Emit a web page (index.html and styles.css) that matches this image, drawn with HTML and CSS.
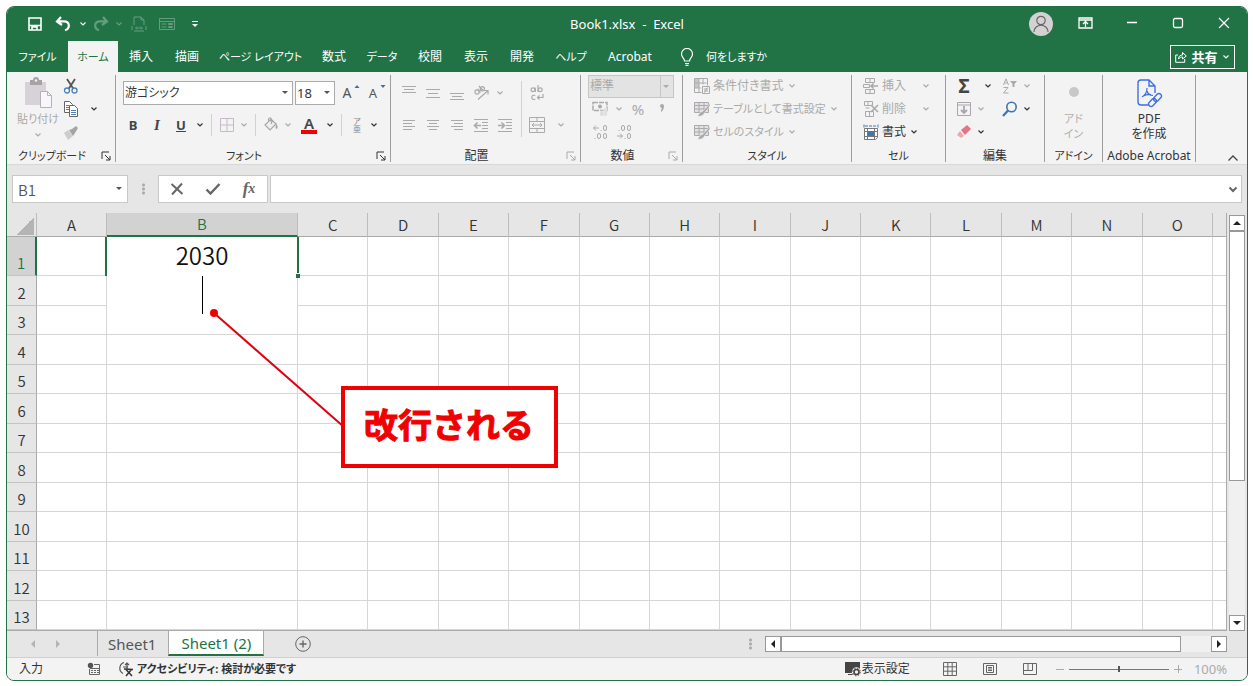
FILE: index.html
```html
<!DOCTYPE html>
<html lang="ja">
<head>
<meta charset="utf-8">
<title>Book1.xlsx - Excel</title>
<link rel="stylesheet" href="styles.css">
</head>
<body>
<svg class="sprite" aria-hidden="true">
  <symbol id="chev" viewBox="0 0 8 6"><path d="M1.500 1.500L4 4l2.500-2.500" fill="none" stroke="currentColor" stroke-width="1.200"/></symbol>
  <symbol id="launch" viewBox="0 0 10 10"><path d="M1 8V1h7M4 4l5 5M9 5v4H5" fill="none" stroke="currentColor"/></symbol>
  <symbol id="save" viewBox="0 0 16 16"><path d="M2 2h12v12H2zM2 9.500h12M5 14v-3h5v3" fill="none" stroke="currentColor" stroke-width="1.600"/></symbol>
  <symbol id="undo" viewBox="0 0 16 16"><path d="M6 1L2 5.500 7 9M2.500 5.300H9c6 0 6.500 7 1 9" fill="none" stroke="currentColor" stroke-width="2.200"/></symbol>
  <symbol id="pagefit" viewBox="0 0 16 16"><path d="M3 9V1h7l3 3v5M10 1v3h3M3 15h10M1 10v4M15 10v4M5 12h6M6 10.500L4.500 12 6 13.500M10 10.500l1.500 1.500-1.500 1.500" fill="none" stroke="currentColor"/></symbol>
  <symbol id="form" viewBox="0 0 16 16"><path d="M.5 2.500h15v11H.5zM.5 5.500h15M2.500 8h5M2.500 11h5M9.500 7.500h4v1h-4zM9.500 10.500h4v1h-4z" fill="none" stroke="currentColor"/></symbol>
  <symbol id="user" viewBox="0 0 24 24"><circle cx="12" cy="12" r="12" fill="#d2d2d2"/><circle cx="12" cy="8.500" r="4.200" fill="none" stroke="#666" stroke-width="1.200"/><path d="M5 20c0-9 14-9 14 0" fill="none" stroke="#666" stroke-width="1.200"/></symbol>
  <symbol id="ribbonopt" viewBox="0 0 16 12"><path d="M1 1h13v10H1zM1 3h13M7.500 10V5M5 7l2.500-2.500L10 7" fill="none" stroke="currentColor" stroke-width="1.300"/></symbol>
  <symbol id="bulb" viewBox="0 0 14 18"><path d="M4.500 13c0-3-3-3.500-3-7a5.500 5.500 0 0 1 11 0c0 3.500-3 4-3 7zM5 15.500h4M5.500 17.300h3" fill="none" stroke="currentColor" stroke-width="1.200"/></symbol>
  <symbol id="share" viewBox="0 0 12 12"><path d="M3 4H.7v7.300h9V8M3.500 8c0-3 2-4 4-4V1.500L11.300 5 7.500 8V6C6 6 4.500 6.500 3.500 8z" fill="none" stroke="currentColor"/></symbol>
  <symbol id="paste" viewBox="0 0 30 32"><path d="M2 5h21v23H2z" fill="#d6d2d8"/><path d="M7 3h3a3 3 0 0 1 6 0h3v5H7z" fill="#a5a3a6"/><circle cx="13" cy="3.500" r="1.200" fill="#f3f3f3"/><path d="M17.500 14.500h7l4 4v12h-11zM24.500 14.500v4h4" fill="#f8f6fa" stroke="#b5b0ba"/></symbol>
  <symbol id="cut" viewBox="0 0 16 16"><path d="M4 1l6.500 10M12 1L5.500 11" stroke="#555" stroke-width="1.800" fill="none"/><g fill="none" stroke="#4d82b8" stroke-width="1.300"><circle cx="4" cy="12.500" r="2.500"/><circle cx="11.500" cy="12.500" r="2.500"/></g></symbol>
  <symbol id="copy" viewBox="0 0 16 16"><g fill="#fff" stroke="#666"><path d="M1.500.5h5l3 3v8h-8z"/><path d="M6.500 4.500h5l3 3v8h-8z"/></g><path d="M3 4.500h3M3 6.500h3M3 8.500h3M8 9.500h5M8 11.500h5M8 13.500h5" stroke="#4d82b8"/></symbol>
  <symbol id="brush" viewBox="0 0 16 16"><path d="M1 8l4-3 5 6-5 4z" fill="#cfcbd0"/><path d="M6 5l3-1 3 4-2 3zM9 4l4-3 2 2-3 5z" fill="#a4a4a4"/></symbol>
  <symbol id="aup" viewBox="0 0 16 16"><path d="M9.500 5h5L12 2z" fill="#3c6fae"/></symbol>
  <symbol id="adown" viewBox="0 0 16 16"><path d="M9.500 2h5L12 5z" fill="#3c6fae"/></symbol>
  <symbol id="borders" viewBox="0 0 16 16"><path d="M1.500 1.500h13v13h-13zM8 1v14M1 8h14" fill="none" stroke="#c5bbc8"/></symbol>
  <symbol id="bucket" viewBox="0 0 16 16"><path d="M2 8l6-6 5 5-6 6zM5.500 5V2q1.500-2.500 3 0v5" fill="#f0edf1" stroke="#aaa6ab" stroke-width="1.200"/><path d="M13 6q2 3 1.500 5-1.500 2-2-.5z" fill="#aaa6ab"/></symbol>
  <symbol id="vtop" viewBox="0 0 16 16"><path d="M1 1.500h14M3 4.500h10M1 7.500h14" stroke="currentColor"/></symbol>
  <symbol id="vmid" viewBox="0 0 16 16"><path d="M1 4.500h14M3 8.500h10M1 12.500h14M1 6.500h0" stroke="currentColor"/></symbol>
  <symbol id="vbot" viewBox="0 0 16 16"><path d="M1 8.500h14M3 11.500h10M1 14.500h14" stroke="currentColor"/></symbol>
  <symbol id="hleft" viewBox="0 0 16 16"><path d="M2 3.500h12M2 6.500h9M2 9.500h12M2 12.500h9" stroke="currentColor"/></symbol>
  <symbol id="hmid" viewBox="0 0 16 16"><path d="M2 3.500h12M4 6.500h8M2 9.500h12M4 12.500h8" stroke="currentColor"/></symbol>
  <symbol id="hright" viewBox="0 0 16 16"><path d="M2 3.500h12M5 6.500h9M2 9.500h12M5 12.500h9" stroke="currentColor"/></symbol>
  <symbol id="outdent" viewBox="0 0 16 16"><path d="M1 2.500h14M9 5.500h6M9 8.500h6M9 11.500h6M1 14.500h14" stroke="currentColor"/><path d="M8 8.500H2M4.500 5.500l-3 3 3 3" fill="none" stroke="currentColor" stroke-width="1.600"/></symbol>
  <symbol id="indent" viewBox="0 0 16 16"><path d="M1 2.500h14M9 5.500h6M9 8.500h6M9 11.500h6M1 14.500h14" stroke="currentColor"/><path d="M1 8.500h6M4.500 5.500l3 3-3 3" fill="none" stroke="currentColor" stroke-width="1.600"/></symbol>
  <symbol id="orient" viewBox="0 0 16 16"><g fill="none" stroke="currentColor" stroke-width="1.200"><circle cx="4" cy="7" r="2.100"/><path d="M4.500 4l3 3.500M6 1l4 4.500"/><circle cx="9.300" cy="3.800" r="2.100"/><path d="M5 14.500L14.500 6M11 5.500h4v4"/></g></symbol>
  <symbol id="wrap" viewBox="0 0 16 16"><g fill="none" stroke="currentColor" stroke-width="1.200"><circle cx="4" cy="4.800" r="1.900"/><path d="M6.300 2.500V7M9 0v7"/><circle cx="11.300" cy="4.800" r="1.900"/><path d="M6.300 10.500q-3.500-1-3.500 1.800t3.500 2M14 9v3.500H8.500M10.500 10.500l-2 2 2 2"/></g></symbol>
  <symbol id="merge" viewBox="0 0 16 16"><path d="M.5.500h15v15H.5zM.5 4.500h15M.5 11.500h15M8 .5v4M8 11.500v4M3 8h10M5 6L3 8l2 2M11 6l2 2-2 2" fill="none" stroke="currentColor"/></symbol>
  <symbol id="money" viewBox="0 0 16 16"><path d="M1 1.500h14v8H1z" fill="none" stroke="currentColor" stroke-width="1.500" stroke-dasharray="5 1"/><circle cx="8" cy="5.500" r="2" fill="currentColor"/><path d="M8 10h4v5H8zM12 7h3v8h-3z" fill="#dedade" stroke="#f3f3f3" stroke-width=".5"/></symbol>
  <symbol id="decup" viewBox="0 0 16 16"><g fill="none" stroke="currentColor"><path d="M7 4H1.500M4 1.500L1.500 4 4 6.500M9 6v1M3 14v1"/><rect x="11.500" y="1.500" width="3" height="5" rx="1.500"/><rect x="5.500" y="9.500" width="3" height="5" rx="1.500"/><rect x="11.500" y="9.500" width="3" height="5" rx="1.500"/></g></symbol>
  <symbol id="decdown" viewBox="0 0 16 16"><g fill="none" stroke="currentColor"><path d="M1 12h5.500M4 9.500L6.500 12 4 14.500M9 14v1M3 6v1"/><rect x="5.500" y="1.500" width="3" height="5" rx="1.500"/><rect x="11.500" y="1.500" width="3" height="5" rx="1.500"/><rect x="11.500" y="9.500" width="3" height="5" rx="1.500"/></g></symbol>
  <symbol id="cond" viewBox="0 0 16 16"><path d="M.5.500h13v7M.5.500v14h7M5 .5v14M9 .5v6M.5 5h12M.5 10h6M8.500 8.500h7v7h-7zM10 11h4M10 13h4M13.500 9.500l-3 5" fill="none" stroke="currentColor"/><path d="M1 1h4v9H1z" fill="currentColor" opacity=".6"/></symbol>
  <symbol id="tblfmt" viewBox="0 0 16 16"><path d="M.5 1.500h14v10H.5zM.5 4.500h14M.5 8h14M5 1.500v10M10 1.500v10" fill="#e6e1e7" stroke="currentColor"/><path d="M16 2.500l-7 7.500-3 1.500L3.500 15q5 1 7-3L16 5z" fill="currentColor" stroke="#f3f3f3" stroke-width=".6"/></symbol>
  <symbol id="cins" viewBox="0 0 16 16"><path d="M2.500.5h9v4h-9zM7 .5v4M2.500 11.500h9v4h-9zM7 11.500v4M.5 6.500h6v3h-6z" fill="none" stroke="currentColor"/><path d="M15 8H8M10.500 5.500L8 8l2.500 2.500" fill="none" stroke="currentColor" stroke-width="1.600"/></symbol>
  <symbol id="cdel" viewBox="0 0 16 16"><path d="M1.500.5h8v4h-8zM5 .5v4M2.500 10.500h8v5h-8zM6.500 10.500v5M2.500 7h4" fill="none" stroke="currentColor"/><path d="M8 4l7 7M15 4l-7 7" stroke="currentColor" stroke-width="1.600"/></symbol>
  <symbol id="cfmt" viewBox="0 0 16 16"><path d="M1 .5v3M15 .5v3M2 2h12" stroke="#3f78ae" stroke-dasharray="3 1"/><path d="M1.500 4.500h13v9l-2 2h-11zM1.500 7.500h13M1.500 12.500h13M4.500 4.500v11M11.500 4.500v11" fill="#fff" stroke="#777"/><path d="M5 7h6v5H5z" fill="#3f78ae"/></symbol>
  <symbol id="sort" viewBox="0 0 16 16"><path d="M1.500 7L4 .8 6.500 7M2.500 5h3M1.500 9.500h4.500L1.500 15H6.500" fill="none" stroke="currentColor"/><path d="M8 3h7l-2.500 3v3h-2V6z" fill="currentColor"/></symbol>
  <symbol id="fill" viewBox="0 0 16 16"><path d="M1.500 1.500h13v13h-13zM1.500 4h13" fill="none" stroke="#aaa4ac"/><path d="M8 5v7M5 9l3 3 3-3" fill="none" stroke="#aaa4ac" stroke-width="1.800"/></symbol>
  <symbol id="find" viewBox="0 0 16 16"><circle cx="9.500" cy="6" r="4.700" fill="none" stroke="#3c74b0" stroke-width="1.600"/><path d="M6 9.500L1 15" stroke="#3c74b0" stroke-width="2.200"/></symbol>
  <symbol id="eraser" viewBox="0 0 16 16"><path d="M5 6l6-5 4 4-6 6z" fill="#e57388"/><path d="M4 7l4 5-3 2-4-3z" fill="#f0a5b1"/></symbol>
  <symbol id="pdf" viewBox="0 0 28 30"><g fill="none" stroke="#3f6fe0" stroke-width="1.400"><path d="M13 26H6q-3 0-3-3V4q0-3 3-3h8l6 6v7M14 1v6h6"/><path d="M7 18q5-3 5-9M12 12q1 4 6 4.500M8 17q4-2 8-1.500" stroke-width="1.200"/><rect x="13" y="21" width="9" height="5" rx="2.500" transform="rotate(-45 17.500 23.500)"/><rect x="18" y="16" width="9" height="5" rx="2.500" transform="rotate(-45 22.500 18.500)"/></g></symbol>
  <symbol id="cross" viewBox="0 0 14 14"><path d="M1.500 2l11 10M12 1.500L2 12.500" stroke="currentColor" stroke-width="2" fill="none"/></symbol>
  <symbol id="check" viewBox="0 0 16 14"><path d="M1.500 7.500l4 4 9-9.500" stroke="currentColor" stroke-width="2.400" fill="none"/></symbol>
  <symbol id="macro" viewBox="0 0 14 14"><path d="M7 2.500h5.500v10h-10V7M3 6.500h9.500" fill="none" stroke="#666"/><path d="M4 8.500h8M4 10.500h8" stroke="#666" stroke-dasharray="2 1"/><circle cx="3.500" cy="3.500" r="2.700" fill="#555"/></symbol>
  <symbol id="acc" viewBox="0 0 16 16"><path d="M6 1.500A6 6 0 0 0 5 12.500M5 6h5M9 2v6M7 4l2-2 2 2" fill="none" stroke="#555" stroke-width="1.200"/><path d="M6 8l9 .5M8 8.500l6 6.500M13.500 8.500L8 15" stroke="#333" stroke-width="1.500" fill="none"/></symbol>
  <symbol id="disp" viewBox="0 0 16 16"><path d="M0 1h15v11H0zM3 13h5v1H3z" fill="#444"/><circle cx="11.500" cy="11" r="3.200" fill="#f3f3f3" stroke="#f3f3f3" stroke-width="3"/><circle cx="11.500" cy="11" r="2.500" fill="none" stroke="#444" stroke-width="1.600"/><circle cx="11.500" cy="11" r="3.800" fill="none" stroke="#444" stroke-dasharray="1.500 1.500"/></symbol>
  <symbol id="vnorm" viewBox="0 0 14 14"><path d="M.5.500h13v13H.5zM.5 4.800h13M.5 9.200h13M4.800.5v13M9.200.5v13" fill="none" stroke="#666"/></symbol>
  <symbol id="vpage" viewBox="0 0 14 14"><path d="M.5 1.500h13v11H.5zM3.500 3.500h7v7h-7zM5 5.500h4M5 7h4M5 8.500h4" fill="none" stroke="#666"/></symbol>
  <symbol id="vbreak" viewBox="0 0 14 14"><path d="M.5 1.500h13v11H.5zM5 1.500v7M9.500 1.500v7M.5 8.500h9" fill="none" stroke="#666"/></symbol>
</svg>

<div class="window">
  <header class="titlebar">
    <div class="qat">
      <button class="w28" aria-label="保存"><svg class="ico"><use href="#save"/></svg></button>
      <button class="w28" aria-label="元に戻す"><svg class="ico"><use href="#undo"/></svg></button>
      <button class="chev" aria-label="元に戻す一覧"><svg><use href="#chev"/></svg></button>
      <button class="w24 faint" aria-label="やり直し"><svg class="ico flip"><use href="#undo"/></svg></button>
      <button class="chev faint" aria-label="やり直し一覧"><svg><use href="#chev"/></svg></button>
      <button class="w28 faint" aria-label="ページ"><svg class="ico"><use href="#pagefit"/></svg></button>
      <button class="w28 faint" aria-label="フォーム"><svg class="ico"><use href="#form"/></svg></button>
      <button class="w28" aria-label="カスタマイズ"><span class="more"></span></button>
    </div>
    <h1>Book1.xlsx&nbsp; -&nbsp; Excel</h1>
    <div class="winbtns">
      <button class="avatar" aria-label="アカウント"><svg><use href="#user"/></svg></button>
      <button aria-label="リボンの表示オプション"><svg width="16" height="12"><use href="#ribbonopt"/></svg></button>
      <button aria-label="最小化"><svg width="12" height="12"><path d="M1 5.500h10" stroke="#fff" stroke-width="1.300"/></svg></button>
      <button aria-label="最大化"><svg width="12" height="12"><rect x="1.500" y="1.500" width="9" height="9" rx="1.500" fill="none" stroke="#fff" stroke-width="1.300"/></svg></button>
      <button aria-label="閉じる"><svg width="12" height="12"><path d="M1 1l10 10M11 1L1 11" stroke="#fff" stroke-width="1.300"/></svg></button>
    </div>
  </header>

  <div class="tabbar">
    <nav class="tabs">
      <button class="kana">ファイル</button><button class="kana on">ホーム</button><button>挿入</button><button>描画</button><button class="kana">ページ レイアウト</button><button>数式</button><button class="kana">データ</button><button>校閲</button><button>表示</button><button>開発</button><button class="kana">ヘルプ</button><button>Acrobat</button>
    </nav>
    <button class="tell kana"><svg width="14" height="18"><use href="#bulb"/></svg>何をしますか</button>
    <button class="share"><svg width="12" height="12"><use href="#share"/></svg><b>共有</b><svg class="cv"><use href="#chev"/></svg></button>
  </div>

  <div class="ribbon">
    <section class="group">
      <div class="body clip">
        <button class="big off"><svg width="30" height="32"><use href="#paste"/></svg><span class="kana">貼り付け</span><svg class="cv"><use href="#chev"/></svg></button>
        <div class="stack">
          <button aria-label="切り取り"><svg class="ico"><use href="#cut"/></svg></button>
          <button aria-label="コピー"><svg class="ico"><use href="#copy"/></svg></button>
          <button aria-label="書式のコピー"><svg class="ico"><use href="#brush"/></svg></button>
        </div>
        <button class="w28 copymenu" aria-label="コピー一覧"><svg class="cv"><use href="#chev"/></svg></button>
      </div>
      <footer><span class="kana">クリップボード</span><button aria-label="詳細"><svg><use href="#launch"/></svg></button></footer>
    </section>

    <section class="group">
      <div class="body two">
        <div class="row fonts">
          <label class="combo face"><select aria-label="フォント名"><option>游ゴシック</option></select></label>
          <label class="combo size"><select aria-label="フォント サイズ"><option>18</option></select></label>
          <button class="w24 asize" aria-label="拡大">A<svg class="ico"><use href="#aup"/></svg></button>
          <button class="w24 asize small" aria-label="縮小">A<svg class="ico"><use href="#adown"/></svg></button>
        </div>
        <div class="row format">
          <button class="w24"><b>B</b></button>
          <button class="w24"><b class="it">I</b></button>
          <button class="w24"><b class="un">U</b></button>
          <button class="chev" aria-label="下線"><svg><use href="#chev"/></svg></button>
          <i class="sep"></i>
          <button class="w20 off" aria-label="罫線"><svg class="ico"><use href="#borders"/></svg></button>
          <button class="chev off" aria-label="罫線一覧"><svg><use href="#chev"/></svg></button>
          <i class="sep"></i>
          <button class="w20 off" aria-label="塗りつぶし"><svg class="ico"><use href="#bucket"/></svg></button>
          <button class="chev off" aria-label="塗りつぶし一覧"><svg><use href="#chev"/></svg></button>
          <button class="w28"><span class="fcolor">A</span></button>
          <button class="chev" aria-label="文字色"><svg><use href="#chev"/></svg></button>
          <i class="sep"></i>
          <button class="w20 ruby"><span>ア</span><span>亜</span></button>
          <button class="chev" aria-label="ふりがな"><svg><use href="#chev"/></svg></button>
        </div>
      </div>
      <footer><span class="kana">フォント</span><button aria-label="詳細"><svg><use href="#launch"/></svg></button></footer>
    </section>

    <section class="group off">
      <div class="body align">
        <div class="two">
          <div class="row">
            <button class="w24" aria-label="上揃え"><svg class="ico"><use href="#vtop"/></svg></button>
            <button class="w24" aria-label="上下中央"><svg class="ico"><use href="#vmid"/></svg></button>
            <button class="w24" aria-label="下揃え"><svg class="ico"><use href="#vbot"/></svg></button>
            <button class="w24" aria-label="方向"><svg class="ico"><use href="#orient"/></svg></button>
            <button class="chev" aria-label="方向一覧"><svg><use href="#chev"/></svg></button>
          </div>
          <div class="row">
            <button class="w24" aria-label="左揃え"><svg class="ico"><use href="#hleft"/></svg></button>
            <button class="w24" aria-label="中央揃え"><svg class="ico"><use href="#hmid"/></svg></button>
            <button class="w24" aria-label="右揃え"><svg class="ico"><use href="#hright"/></svg></button>
            <button class="w24" aria-label="インデント減"><svg class="ico"><use href="#outdent"/></svg></button>
            <button class="w24" aria-label="インデント増"><svg class="ico"><use href="#indent"/></svg></button>
          </div>
        </div>
        <i class="sep tall"></i>
        <div class="two">
          <div class="row"><button class="w20" aria-label="折り返し"><svg class="ico"><use href="#wrap"/></svg></button></div>
          <div class="row"><button class="w20" aria-label="結合"><svg class="ico"><use href="#merge"/></svg></button><button class="w28" aria-label="結合一覧"><svg class="cv"><use href="#chev"/></svg></button></div>
        </div>
      </div>
      <footer><span>配置</span><button aria-label="詳細"><svg><use href="#launch"/></svg></button></footer>
    </section>

    <section class="group off">
      <div class="body three number">
        <div class="row"><label class="combo num"><select aria-label="表示形式" disabled><option>標準</option></select></label></div>
        <div class="row">
          <button class="w24" aria-label="通貨"><svg class="ico"><use href="#money"/></svg></button>
          <button class="chev" aria-label="通貨一覧"><svg><use href="#chev"/></svg></button>
          <button class="w24 sym">%</button>
          <button class="w24" aria-label="桁区切り"><svg width="6" height="10" viewBox="0 0 6 10"><path d="M1 2a2 2 0 0 1 4 0q0 4-3 6V6l1-2a2 2 0 0 1-2-2z" fill="currentColor"/></svg></button>
        </div>
        <div class="row">
          <button class="w24" aria-label="小数点増"><svg class="ico"><use href="#decup"/></svg></button>
          <button class="w24" aria-label="小数点減"><svg class="ico"><use href="#decdown"/></svg></button>
        </div>
      </div>
      <footer><span>数値</span><button aria-label="詳細"><svg><use href="#launch"/></svg></button></footer>
    </section>

    <section class="group off">
      <div class="body three items">
        <button class="row"><svg class="ico"><use href="#cond"/></svg>条件付き書式<svg class="cv"><use href="#chev"/></svg></button>
        <button class="row kana"><svg class="ico"><use href="#tblfmt"/></svg>テーブルとして書式設定<svg class="cv"><use href="#chev"/></svg></button>
        <button class="row kana"><svg class="ico"><use href="#tblfmt"/></svg>セルのスタイル<svg class="cv"><use href="#chev"/></svg></button>
      </div>
      <footer><span class="kana">スタイル</span></footer>
    </section>

    <section class="group">
      <div class="body three items">
        <button class="row off wide"><svg class="ico"><use href="#cins"/></svg>挿入<svg class="cv"><use href="#chev"/></svg></button>
        <button class="row off wide"><svg class="ico"><use href="#cdel"/></svg>削除<svg class="cv"><use href="#chev"/></svg></button>
        <button class="row"><svg class="ico"><use href="#cfmt"/></svg>書式<svg class="cv"><use href="#chev"/></svg></button>
      </div>
      <footer><span class="kana">セル</span></footer>
    </section>

    <section class="group">
      <div class="body edit">
        <button class="sigma">Σ</button>
        <button class="w28" aria-label="合計一覧"><svg class="cv"><use href="#chev"/></svg></button>
        <button class="off" aria-label="並べ替え"><svg class="ico"><use href="#sort"/></svg></button>
        <button class="chev off" aria-label="並べ替え一覧"><svg><use href="#chev"/></svg></button>
        <button aria-label="フィル"><svg class="ico"><use href="#fill"/></svg></button>
        <button class="chev off" aria-label="フィル一覧"><svg><use href="#chev"/></svg></button>
        <button aria-label="検索"><svg class="ico"><use href="#find"/></svg></button>
        <button class="chev" aria-label="検索一覧"><svg><use href="#chev"/></svg></button>
        <button aria-label="クリア"><svg class="ico"><use href="#eraser"/></svg></button>
        <button class="chev" aria-label="クリア一覧"><svg><use href="#chev"/></svg></button>
      </div>
      <footer><span>編集</span></footer>
    </section>

    <section class="group">
      <div class="body"><button class="big addin kana off"><i class="dot"></i><span>アド<br>イン</span></button></div>
      <footer><span class="kana">アドイン</span></footer>
    </section>

    <section class="group">
      <div class="body"><button class="big addin"><svg width="28" height="30"><use href="#pdf"/></svg><span>PDF<br>を作成</span></button></div>
      <footer><span>Adobe Acrobat</span></footer>
    </section>

    <button class="collapse" aria-label="リボンを折りたたむ"><svg width="12" height="8"><path d="M1.500 6.500L6 2l4.500 4.500" fill="none" stroke="#444" stroke-width="1.300"/></svg></button>
  </div>

  <div class="formulabar">
    <label class="combo namebox"><input aria-label="名前ボックス" value="B1"></label>
    <span class="grip"></span>
    <div class="fbtns">
      <button aria-label="キャンセル"><svg width="14" height="14"><use href="#cross"/></svg></button>
      <button aria-label="入力"><svg width="16" height="14"><use href="#check"/></svg></button>
      <button class="fx">f<small>x</small></button>
    </div>
    <label class="formula"><input aria-label="数式バー"><svg width="10" height="7"><path d="M1.500 1.500L5 5l3.500-3.500" fill="none" stroke="#666" stroke-width="2"/></svg></label>
  </div>

  <main class="work">
    <div class="sheet">
      <table>
        <colgroup id="cols"></colgroup>
        <thead><tr id="head"></tr></thead>
        <tbody id="rows"></tbody>
      </table>
      <svg class="leader" width="140" height="126"><path d="M7 7l130 114" stroke="#e00010" stroke-width="2"/><circle cx="7" cy="7" r="4" fill="#f00000"/></svg>
      <p class="callout">改行される</p>
    </div>
    <div class="vscroll">
      <button aria-label="上へ"><i class="up"></i></button>
      <div class="track"><div class="thumb"></div></div>
      <button aria-label="下へ"><i class="down"></i></button>
    </div>
  </main>

  <div class="sheetbar">
    <div class="arrows"><button aria-label="前のシート"><i class="left"></i></button><button aria-label="次のシート"><i class="right"></i></button></div>
    <button class="stab">Sheet1</button>
    <button class="stab on">Sheet1 (2)</button>
    <button class="add" aria-label="新しいシート"><svg width="16" height="16"><circle cx="8" cy="8" r="7.300" fill="none" stroke="#666"/><path d="M8 4.500v7M4.500 8h7" stroke="#666" stroke-width="1.400"/></svg></button>
    <span class="grip"></span>
    <div class="hscroll">
      <button aria-label="左へ"><i class="left"></i></button>
      <div class="track"><div class="thumb"></div></div>
      <button aria-label="右へ"><i class="right"></i></button>
    </div>
  </div>

  <footer class="status">
    <span class="mode">入力</span>
    <button class="macro" aria-label="マクロの記録"><svg width="14" height="14"><use href="#macro"/></svg></button>
    <button class="acc kana"><svg class="ico"><use href="#acc"/></svg><b>アクセシビリティ: 検討が必要です</b></button>
    <button class="disp"><svg class="ico"><use href="#disp"/></svg>表示設定</button>
    <div class="views">
      <button aria-label="標準"><svg width="14" height="14"><use href="#vnorm"/></svg></button>
      <button aria-label="ページ レイアウト"><svg width="14" height="14"><use href="#vpage"/></svg></button>
      <button aria-label="改ページ"><svg width="14" height="14"><use href="#vbreak"/></svg></button>
    </div>
    <div class="zoom">
      <button aria-label="縮小"><svg width="8" height="8"><path d="M0 4.500h8" stroke="#aaa"/></svg></button>
      <input type="range" aria-label="ズーム" min="10" max="190" value="100">
      <button aria-label="拡大"><svg width="8" height="8"><path d="M0 4.500h8M4.500 0v8" stroke="#aaa"/></svg></button>
    </div>
    <span class="pct">100%</span>
  </footer>
</div>
<script src="script.js"></script>
</body>
</html>
```

FILE: styles.css
```css
* { box-sizing: border-box; }
body {
  margin: 0;
  padding: 6px 5px 5px 6px;
  background: #fff;
  color: #333;
  font: 12px/16px "Noto Sans", "Noto Sans CJK JP", sans-serif;
  font-feature-settings: "palt";
}
button, input, select, textarea { font: inherit; font-feature-settings: inherit; color: inherit; }
button { border: 0; padding: 0; margin: 0; background: none; display: flex; align-items: center; justify-content: center; white-space: nowrap; }
input, select { outline: 0; }
svg { display: block; flex: none; }
.sprite { display: none; }
.kana { font-size: 11px; }
.ico { width: 16px; height: 16px; }
.flip { transform: scaleX(-1); }
.cv, .chev svg { width: 8px; height: 6px; }
.chev { width: 14px; height: 16px; }
.w20 { width: 20px; }
.w24 { width: 24px; }
.w28 { width: 28px; }
.row { display: flex; align-items: center; }

.window {
  display: flex;
  flex-direction: column;
  min-height: calc(100vh - 11px);
  border: 1px solid #217346;
  border-radius: 8px;
  overflow: hidden;
  background: #e6e6e6;
}

/* title bar */
.titlebar { display: grid; grid-template-columns: 1fr auto 1fr; align-items: center; height: 34px; background: #217346; color: #fff; }
.titlebar h1 { margin: 0; font-size: 13px; font-weight: 400; line-height: 18px; }
.qat { display: flex; align-items: center; padding-left: 14px; }
.qat .chev { width: 12px; }
.faint { opacity: .3; }
.more { width: 6px; border-top: 1px solid #fff; padding-top: 2px; }
.more::after { content: ""; display: block; border: 3px solid transparent; border-top-color: #fff; border-bottom: 0; }
.winbtns { display: flex; justify-content: flex-end; align-items: center; }
.winbtns button { width: 46px; height: 30px; padding-bottom: 3px; }
.winbtns .avatar { width: 24px; margin-right: 10px; padding: 0; }
.avatar svg { width: 24px; height: 24px; }

/* ribbon tabs */
.tabbar { display: flex; align-items: center; height: 31px; background: #217346; color: #fff; }
.tabs { display: grid; grid-template-columns: 61px 50px 46px 46px 101px 46px 50px 46px 46px 46px 52px 66px; align-self: stretch; }
.tabs .on { background: #f3f3f3; color: #217346; }
.tell { gap: 12px; margin-left: 17px; }
.share { gap: 4px; width: 65px; height: 24px; margin: 0 12px 0 auto; border: 1px solid #fff; font-size: 13px; }

/* ribbon */
.ribbon { display: grid; grid-template-columns: 109px 275px 190px 102px 169px 94px 99px 58px 93px 1fr; height: 93px; padding: 3px 0 2px; background: #f3f3f3; border-bottom: 1px solid #d8d8d8; }
.group { display: flex; flex-direction: column; border-right: 1px solid #9d9d9d; min-width: 0; }
.body { flex: 1; }
.group footer { display: flex; align-items: center; height: 12px; color: #333; line-height: 12px; white-space: nowrap; }
.group footer span { flex: 1; text-align: center; }
.group footer button { width: 18px; height: 12px; }
.group footer svg { width: 10px; height: 10px; }
.off { color: #aaa; }
.off footer button { color: #aaa; }
.sep { width: 1px; height: 22px; margin: 0 5px 0 4px; background: #d2d2d2; }
.sep.tall { height: 56px; margin-top: 6px; }
.two { display: grid; grid-template-rows: 36px 28px; align-content: start; }
.three { display: grid; grid-template-rows: 22px 23px 23px; align-content: start; }

.clip { display: flex; padding-left: 7px; }
.big { flex-direction: column; justify-content: flex-start; width: 48px; padding-top: 2px; }
.big span { line-height: 20px; }
.big .cv { margin-top: 3px; }
.stack { display: grid; grid-template-rows: 22px 24px 23px; align-content: start; width: 18px; }
.copymenu { height: 68px; }

.combo { position: relative; display: flex; background: #fff; border: 1px solid #ababab; height: 24px; }
.combo::after { content: ""; position: absolute; right: 4px; top: 9px; border: 3px solid transparent; border-top-color: #555; border-bottom: 0; }
.combo select, .combo input { appearance: none; flex: 1; min-width: 0; border: 0; padding: 0 1px; background: transparent; opacity: 1; }
.fonts { gap: 2px; padding-left: 7px; }
.face { width: 170px; }
.size { width: 40px; font-size: 13px; }
.fonts .asize { position: relative; padding-right: 4px; font-size: 14px; color: #555; }
.fonts .small { font-size: 13px; }
.asize svg { position: absolute; right: 0; top: -2px; }
.format { padding-left: 5px; }
.format b { font-size: 13px; color: #444; }
.format .it { font: italic 700 15px/16px "Liberation Serif", serif; }
.format .un { text-decoration: underline; }
.fcolor { width: 16px; border-bottom: 4px solid #f00000; font-size: 15px; line-height: 14px; font-weight: 600; color: #444; }
.ruby { flex-direction: column; font-size: 8px; line-height: 8px; color: #888; }

.align { display: flex; padding-left: 6px; }
.align .two:first-child { width: 120px; }
.number { padding-left: 7px; }
.num { width: 86px; height: 23px; background: #e3e3e3; border-color: #c6c6c6; }
.num::after { border-top-color: #aaa; }
.num::before { content: ""; position: absolute; right: 12px; top: 0; bottom: 0; border-left: 1px solid #c6c6c6; }
.sym { font-size: 15px; }
.items { padding-left: 11px; justify-items: start; }
.items .row { gap: 3px; }
.items .cv { margin-left: 1px; }
.items .wide .cv { margin-left: 13px; }
.edit { display: grid; grid-template-columns: 20px 26px 20px 14px; grid-template-rows: 22px 23px 23px; align-content: start; align-items: center; padding-left: 8px; }
.edit .chev { justify-self: start; }
.sigma { font-size: 19px; font-weight: 700; color: #444; }
.big.addin { width: 100%; padding-top: 4px; color: #333; }
.addin span { line-height: 15px; margin-top: 2px; }
.big.addin.off { color: #b0b0b0; }
.dot { width: 10px; height: 10px; margin: 8px 0 12px; border-radius: 50%; background: #c8c8c8; }
.collapse { align-self: end; justify-self: end; margin-right: 8px; }

/* formula bar */
.formulabar { display: flex; align-items: center; height: 48px; padding: 0 5px; }
.namebox, .fbtns, .formula { height: 28px; background: #fff; border: 1px solid #c8c8c8; }
.namebox { width: 116px; font-size: 15px; color: #555; }
.namebox::after { top: 11px; right: 5px; }
.combo.namebox input { padding: 2px 5px 0; font-family: "Noto Sans CJK JP", sans-serif; font-weight: 350; }
.grip { width: 3px; height: 12px; margin: 0 13px 0 14px; background: radial-gradient(circle, #aaa 1px, transparent 2px) 0 0 / 3px 4px; }
.fbtns { display: grid; grid-template-columns: 1fr 1fr 1fr; width: 110px; color: #666; }
.fx { font: italic 700 17px/20px "Liberation Serif", serif; }
.fx small { font-size: 14px; }
.formula { flex: 1; display: flex; align-items: center; margin-left: 2px; padding-right: 3px; }
.formula input { flex: 1; border: 0; background: none; }

/* worksheet */
.work { flex: 1; display: flex; }
.sheet { position: relative; flex: 1; display: grid; border-right: 1px solid #ababab; border-bottom: 1px solid #ababab; }
table { width: 100%; height: 100%; table-layout: fixed; border-collapse: separate; border-spacing: 0; background: #fff; font: 350 15px/20px "Noto Sans CJK JP", sans-serif; }
.c-row { width: 30px; }
.c-a { width: 70px; }
.c-b { width: 191px; }
.c-end { width: 13px; }
th, td { padding: 0; font-weight: 350; }
thead th { height: 24px; background: #e6e6e6; border-right: 1px solid #bcbcbc; border-bottom: 1px solid #ababab; }
thead .c-end { border-right: 0; }
thead .sel { background: #d2d2d2; color: #217346; border-bottom: 2px solid #217346; }
thead .corner { background: linear-gradient(135deg, transparent 50%, #b4b4b4 50%) 9px 4px / 18px 18px no-repeat #e6e6e6; }
tbody th { background: #e6e6e6; border-right: 1px solid #ababab; border-bottom: 1px solid #c4c4c4; vertical-align: bottom; padding-bottom: 2px; }
tbody .sel { background: #d2d2d2; color: #217346; border-right: 2px solid #217346; }
.r1 { height: 39px; }
td { border-right: 1px solid #d6d6d6; border-bottom: 1px solid #d6d6d6; }
td:last-child { border-right: 0; }
.edit-cell { position: relative; }
.editor { position: absolute; z-index: 1; top: 0; left: 0; width: 100%; height: 97px; background: #fff; }
.editor::before { content: ""; position: absolute; inset: 0 -2px 58px -2px; border: 2px solid #217346; border-top: 0; border-bottom: 0; pointer-events: none; }
.editor::after { content: ""; position: absolute; right: -3px; top: 36px; width: 4px; height: 4px; background: #217346; border-top: 1px solid #fff; }
.editor textarea { display: block; width: 100%; height: 97px; border: 0; padding: 0; background: none; resize: none; outline: 0; overflow: hidden; text-align: center; color: #111; font: 350 24px/36px "Noto Sans CJK JP", sans-serif; font-feature-settings: normal; }
.caret { position: absolute; left: 50%; top: 39px; width: 1px; height: 38px; background: #000; }

.leader { position: absolute; z-index: 2; left: 200px; top: 93px; }
.callout { position: absolute; z-index: 3; left: 334px; top: 173px; margin: 0; padding: 9px 20px 15px 19px; background: #fff; border: 4px solid #f00000; color: #f00000; font: 700 34px/50px "Noto Sans CJK JP", sans-serif; font-feature-settings: normal; -webkit-text-stroke: 1px #f00000; stroke-linejoin: round; white-space: nowrap; }

.vscroll { display: flex; flex-direction: column; width: 16px; margin: 2px 2px 0; }
.vscroll button, .hscroll button { flex: none; width: 16px; height: 16px; background: #fff; border: 1px solid #999; }
.vscroll .track, .hscroll .track { flex: 1; background: #f0f0f0; }
.thumb { background: #fff; border: 1px solid #999; }
.vscroll .thumb { height: 65%; }
.up, .down, .left, .right { border: 4px solid transparent; }
.up { border-bottom-color: #222; border-top: 0; }
.down { border-top-color: #222; border-bottom: 0; }
.left { border-right-color: #222; border-left: 0; }
.right { border-left-color: #222; border-right: 0; }

/* sheet tabs */
.sheetbar { display: flex; height: 26px; color: #555; }
.arrows { display: flex; width: 90px; padding: 0 27px 0 13px; opacity: .25; }
.arrows button { flex: 1; }
.stab { height: 25px; padding: 0 12px 0 10px; border-left: 1px solid #ababab; font-size: 15px; }
.stab.on { padding: 0 12px; background: #fff; color: #217346; border-right: 1px solid #ababab; border-bottom: 2px solid #217346; }
.add { margin-left: 31px; }
.sheetbar .grip { margin-left: auto; align-self: center; }
.hscroll { display: flex; align-items: center; width: 462px; margin-right: 20px; }
.hscroll .track { display: flex; height: 16px; }
.hscroll .thumb { width: 93%; }

/* status bar */
.status { display: flex; align-items: center; height: 23px; background: #f3f3f3; border-top: 1px solid #d0d0d0; }
.mode { width: 80px; padding-left: 12px; }
.macro { width: 14px; margin-right: 17px; }
.acc { gap: 3px; }
.disp { gap: 1px; margin-left: auto; }
.views { display: flex; gap: 26px; margin-left: 33px; }
.zoom { display: flex; align-items: center; gap: 5px; margin-left: 19px; }
.zoom input { appearance: none; width: 100px; height: 8px; margin: 0; background: linear-gradient(#777, #777) center / 100% 1px no-repeat; }
.zoom input::-webkit-slider-thumb { appearance: none; width: 2px; height: 6px; background: #555; }
.pct { margin: 0 20px 0 12px; font-size: 13px; color: #aaa; }
```

FILE: script.js
```js
const letters = "ABCDEFGHIJKLMNO".split("");
const widthClass = { A: "c-a", B: "c-b" };

document.getElementById("cols").innerHTML =
  '<col class="c-row">' +
  letters.map((l) => `<col class="${widthClass[l] || "c-std"}">`).join("") +
  '<col class="c-end">';

document.getElementById("head").innerHTML =
  '<th class="corner"></th>' +
  letters.map((l) => `<th scope="col"${l === "B" ? ' class="sel"' : ""}>${l}</th>`).join("") +
  '<th class="c-end"></th>';

const editor =
  '<td class="edit-cell"><div class="editor">' +
  '<textarea aria-label="B1">2030\n</textarea><span class="caret"></span></div></td>';

let rows = "";
for (let r = 1; r <= 13; r++) {
  const first = r === 1;
  rows += `<tr${first ? ' class="r1"' : ""}><th scope="row"${first ? ' class="sel"' : ""}>${r}</th>`;
  letters.forEach((l) => {
    rows += first && l === "B" ? editor : "<td></td>";
  });
  rows += "<td></td></tr>";
}
document.getElementById("rows").innerHTML = rows;
```
